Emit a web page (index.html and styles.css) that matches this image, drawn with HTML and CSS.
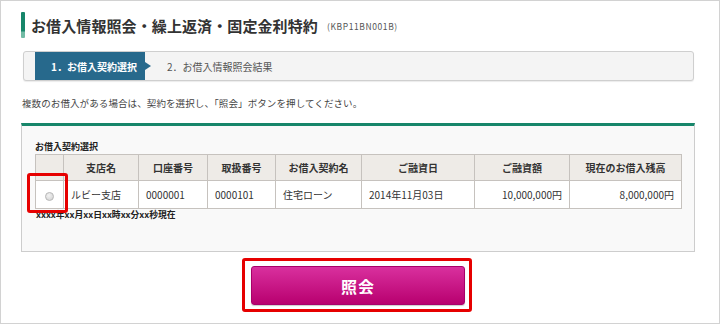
FILE: index.html
```html
<!DOCTYPE html>
<html lang="ja">
<head>
  <meta charset="UTF-8" />
  <title>お借入情報照会・繰上返済・固定金利特約</title>
  <link rel="stylesheet" href="styles.css">
</head>
<body>
  <div class="page">
    <div class="title-row">
      <span class="title-bar"></span>
      <h1 class="title">お借入情報照会・繰上返済・固定金利特約</h1>
      <span class="screen-id">(KBP11BN001B)</span>
    </div>

    <div class="steps">
      <div class="step active">1．お借入契約選択</div>
      <div class="step">2．お借入情報照会結果</div>
    </div>

    <p class="lead">複数のお借入がある場合は、契約を選択し、「照会」ボタンを押してください。</p>

    <div class="panel">
      <div class="panel-label">お借入契約選択</div>
      <div class="table-wrap">
        <table class="loans">
          <colgroup>
            <col style="width:28px">
            <col style="width:75px">
            <col style="width:69px">
            <col style="width:68px">
            <col style="width:86px">
            <col style="width:113px">
            <col style="width:95px">
            <col style="width:112px">
          </colgroup>
          <thead>
            <tr>
              <th></th>
              <th>支店名</th>
              <th>口座番号</th>
              <th>取扱番号</th>
              <th>お借入契約名</th>
              <th>ご融資日</th>
              <th>ご融資額</th>
              <th>現在のお借入残高</th>
            </tr>
          </thead>
          <tbody>
            <tr>
              <td class="radio-cell"><span class="radio"></span></td>
              <td>ルビー支店</td>
              <td>0000001</td>
              <td>0000101</td>
              <td>住宅ローン</td>
              <td>2014年11月03日</td>
              <td class="num">10,000,000円</td>
              <td class="num">8,000,000円</td>
            </tr>
          </tbody>
        </table>
        <div class="asof">xxxx年xx月xx日xx時xx分xx秒現在</div>
        <span class="mark mark-radio"></span>
      </div>
    </div>

    <div class="actions">
      <div class="mark-box">
        <button class="btn-submit">照会</button>
      </div>
    </div>
  </div>
</body>
</html>
```

FILE: styles.css
```css
* {
  box-sizing: border-box;
}
body {
  margin: 0;
  font-family: "Noto Sans CJK JP", "Noto Sans", sans-serif;
  color: #333;
  background: #fff;
}
.page {
  width: 720px;
  height: 324px;
  border: 1px solid #d2d2d2;
  padding: 11px 24px 0 20px;
}
.title-row {
  display: flex;
  align-items: center;
  height: 26px;
}
.title-bar {
  width: 4px;
  height: 26px;
  border-radius: 1px;
  background: linear-gradient(#17866a 0%, #17866a 72%, #72bba5 78%, #72bba5 100%);
}
.title {
  margin: 0 0 0 6px;
  font-size: 15px;
  font-weight: bold;
  color: #333;
  letter-spacing: 0.1px;
}
.screen-id {
  margin-left: 9px;
  font-size: 8.5px;
  color: #555;
  letter-spacing: 0.6px;
  margin-top: 2px;
}
.steps {
  display: flex;
  align-items: stretch;
  height: 30px;
  margin: 13px 1px 0 2px;
  padding: 0 0 0 11px;
  border: 1px solid #cfcfcf;
  border-radius: 3px;
  background: #f4f4f4;
  box-shadow: 0 1px 1px rgba(0, 0, 0, 0.08);
}
.step {
  display: flex;
  align-items: center;
  font-size: 10px;
  color: #555;
}
.step.active {
  position: relative;
  width: 110px;
  padding-left: 16px;
  margin-right: 22px;
  background: #27698c;
  color: #fff;
  font-weight: bold;
}
.step.active::after {
  content: "";
  position: absolute;
  right: -6px;
  top: 10px;
  border-top: 4px solid transparent;
  border-bottom: 4px solid transparent;
  border-left: 6px solid #27698c;
}
.lead {
  margin: 15px 0 0 1px;
  font-size: 9.5px;
  line-height: 14px;
  color: #444;
  letter-spacing: 0.1px;
}
.panel {
  margin-top: 13px;
  height: 129px;
  padding: 14px 12px 0 13px;
  background: #f9f9f9;
  border: 1px solid #cdcdcd;
  border-top: 3px solid #17866a;
}
.panel-label {
  font-size: 9px;
  line-height: 14px;
  color: #222;
  font-weight: bold;
}
.table-wrap {
  position: relative;
}
.loans {
  width: 646px;
  table-layout: fixed;
  border-collapse: collapse;
  font-size: 10px;
}
.loans th,
.loans td {
  border: 1px solid #c6c2be;
  padding: 0 7px;
  text-align: left;
  white-space: nowrap;
}
.loans th {
  height: 26px;
  background: #eeebe7;
  text-align: center;
  font-weight: bold;
  color: #333;
}
.loans td {
  height: 28px;
  background: #fff;
  color: #333;
}
.loans td.num {
  text-align: right;
}
.loans td.radio-cell {
  text-align: center;
  padding: 0;
}
.radio {
  display: inline-block;
  width: 9px;
  height: 9px;
  border-radius: 50%;
  border: 1px solid #b9b9b9;
  background: radial-gradient(circle at 40% 35%, #f2f2f2, #cfcfcf);
  vertical-align: middle;
}
.asof {
  font-size: 8.8px;
  line-height: 12px;
  font-weight: bold;
  color: #222;
  padding-left: 1px;
}
.mark {
  position: absolute;
  border: 3px solid #e60000;
  border-radius: 3px;
}
.mark-radio {
  left: -8px;
  top: 19px;
  width: 41px;
  height: 40px;
}
.actions {
  display: flex;
  justify-content: center;
  margin-top: 6px;
  padding-right: 2px;
}
.mark-box {
  border: 3px solid #e60000;
  border-radius: 3px;
  padding: 5px 4px 4px 6px;
}
.btn-submit {
  display: block;
  width: 214px;
  height: 39px;
  border: 1px solid #a8006a;
  border-radius: 3px;
  background: linear-gradient(#d9309e, #b8006f);
  color: #fff;
  font-family: "Noto Sans CJK JP", sans-serif;
  font-size: 16px;
  font-weight: bold;
  letter-spacing: 1px;
  box-shadow: 0 1px 1px rgba(0, 0, 0, 0.2);
}
```
